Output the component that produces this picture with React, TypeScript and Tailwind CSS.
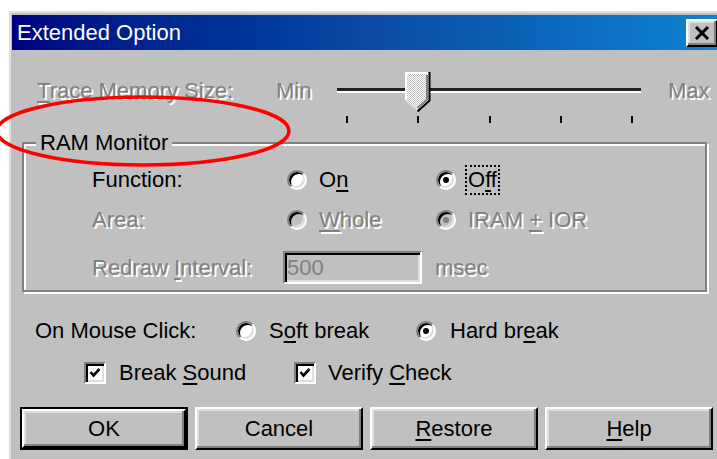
import type { ReactNode } from 'react'

const dim = 'text-[#808080] [text-shadow:2px_2px_0_#ffffff]'

function U({ children }: { children: ReactNode }) {
    return <span className="underline decoration-2 underline-offset-[3px]">{children}</span>
}

function Radio({ checked, disabled }: { checked?: boolean; disabled?: boolean }) {
    return (
        <span
            className={`flex h-[20px] w-[20px] shrink-0 items-center justify-center rounded-full border-2 border-t-[#808080] border-l-[#808080] border-r-white border-b-white shadow-[inset_2px_2px_0_#000,inset_-2px_-2px_0_#dfdfdf] ${
                disabled ? 'bg-[#c0c0c0]' : 'bg-white'
            }`}
        >
            {checked && <span className={`h-[6px] w-[6px] rounded-full ${disabled ? 'bg-[#808080]' : 'bg-black'}`} />}
        </span>
    )
}

function Check() {
    return (
        <span className="flex h-[22px] w-[22px] shrink-0 items-center justify-center border-2 border-t-[#808080] border-l-[#808080] border-r-white border-b-white bg-white shadow-[inset_2px_2px_0_#000,inset_-2px_-2px_0_#dfdfdf]">
            <svg width="14" height="14" viewBox="0 0 14 14">
                <path d="M2.5 6 L5.5 9.5 L11.5 3" fill="none" stroke="#000" strokeWidth="2.6" />
            </svg>
        </span>
    )
}

const bevel =
    'border-2 border-t-white border-l-white border-r-black border-b-black bg-[#c0c0c0] shadow-[inset_-2px_-2px_0_#808080,inset_2px_2px_0_#dfdfdf]'

function Button({ children, primary }: { children: ReactNode; primary?: boolean }) {
    if (primary) {
        return (
            <div className="h-[43px] w-[168px] border-2 border-black">
                <button className={`flex h-full w-full items-center justify-center ${bevel}`}>{children}</button>
            </div>
        )
    }
    return <button className={`flex h-[43px] w-[168px] items-center justify-center ${bevel}`}>{children}</button>
}

function Slider() {
    const ticks = [10, 81, 153, 224, 295]
    return (
        <div className="relative h-[52px] w-[304px]">
            <div className="absolute left-0 top-[16px] h-[5px] w-[304px] border-b-2 border-white bg-[#222]" />
            <svg className="absolute left-[68px] top-0" width="26" height="40" viewBox="0 0 26 40">
                <defs>
                    <pattern id="dither" width="2" height="2" patternUnits="userSpaceOnUse">
                        <rect width="2" height="2" fill="#c0c0c0" />
                        <rect width="1" height="1" fill="#fff" />
                        <rect x="1" y="1" width="1" height="1" fill="#fff" />
                    </pattern>
                </defs>
                <polygon points="1,1 24,1 24,28 12.5,39 1,28" fill="url(#dither)" />
                <polyline points="1,28 1,1 23,1" fill="none" stroke="#fff" strokeWidth="2" />
                <polyline points="1,28 11,37" fill="none" stroke="#dfdfdf" strokeWidth="2" />
                <polyline points="22,3 22,27.5 12.5,36" fill="none" stroke="#808080" strokeWidth="2" />
                <polyline points="24.5,0 24.5,28.5 12.5,39.5" fill="none" stroke="#000" strokeWidth="2" />
            </svg>
            {ticks.map((x) => (
                <div key={x} className="absolute top-[44px] h-[7px] w-[2px] bg-black" style={{ left: x - 1 }} />
            ))}
        </div>
    )
}

export default function App() {
    return (
        <div className="relative h-[459px] w-[717px] overflow-hidden bg-white font-['Liberation_Sans',Arial,sans-serif] text-[22px] leading-[26px] text-black">
            <div className="ml-[9px] mt-[11px] w-[716px] border-l-2 border-t-2 border-[#dfdfdf] bg-[#c0c0c0] pl-[1px] pt-[2px]">
                {/* title bar */}
                <div className="flex h-[35px] w-[710px] items-center justify-between bg-gradient-to-r from-[#000080] via-[#0c4aa6] to-[#1084d0] pl-[5px] pr-[4px]">
                    <span className="text-white">Extended Option</span>
                    <button className={`flex h-[28px] w-[32px] items-center justify-center ${bevel}`}>
                        <svg width="16" height="14" viewBox="0 0 16 14">
                            <path d="M2 1 L14 13 M14 1 L2 13" stroke="#000" strokeWidth="3" />
                        </svg>
                    </button>
                </div>

                <div className="h-[420px] pt-[22px]">
                    {/* trace memory size */}
                    <div className="flex items-start pl-[25px]">
                        <span className={`flex h-[38px] w-[239px] items-center ${dim}`}>
                            <span>
                                <U>T</U>race Memory Size:
                            </span>
                        </span>
                        <span className={`flex h-[38px] w-[61px] items-center ${dim}`}>Min</span>
                        <Slider />
                        <span className={`ml-[27px] flex h-[38px] items-center ${dim}`}>Max</span>
                    </div>

                    {/* RAM monitor group */}
                    <fieldset className="ml-[10px] mt-[6px] w-[685px] border-2 border-[#808080] pb-[6px] pl-[12px] pt-[5px] shadow-[inset_2px_2px_0_#fff,2px_2px_0_#fff]">
                        <legend className="bg-[#c0c0c0] px-[4px] leading-[26px]">RAM Monitor</legend>
                        <div className="pl-[56px]">
                            <div className="flex h-[38px] items-center">
                                <span className="w-[195px]">Function:</span>
                                <span className="flex w-[149px] items-center gap-[12px]">
                                    <Radio />
                                    <span>
                                        O<U>n</U>
                                    </span>
                                </span>
                                <span className="flex items-center gap-[9px]">
                                    <Radio checked />
                                    <span className="border-2 border-dotted border-black px-[1px] leading-[26px]">
                                        O<U>f</U>f
                                    </span>
                                </span>
                            </div>
                            <div className="mt-[2px] flex h-[38px] items-center">
                                <span className={`w-[195px] ${dim}`}>Area:</span>
                                <span className="flex w-[149px] items-center gap-[12px]">
                                    <Radio disabled />
                                    <span className={dim}>
                                        <U>W</U>hole
                                    </span>
                                </span>
                                <span className="flex items-center gap-[12px]">
                                    <Radio checked disabled />
                                    <span className={dim}>
                                        IRAM <U>+</U> IOR
                                    </span>
                                </span>
                            </div>
                            <div className="mt-[12px] flex h-[33px] items-center">
                                <span className={`w-[191px] ${dim}`}>
                                    Redraw <U>I</U>nterval:
                                </span>
                                <span className="flex h-[33px] w-[139px] items-center border-2 border-t-[#808080] border-l-[#808080] border-r-white border-b-white bg-[#c0c0c0] pl-[2px] text-[#808080] shadow-[inset_2px_2px_0_#000,inset_-2px_-2px_0_#dfdfdf]">
                                    500
                                </span>
                                <span className={`ml-[13px] ${dim}`}>msec</span>
                            </div>
                        </div>
                    </fieldset>

                    {/* mouse click mode */}
                    <div className="ml-[23px] mt-[22px] flex h-[34px] items-center">
                        <span className="w-[201px]">On Mouse Click:</span>
                        <span className="flex w-[180px] items-center gap-[13px]">
                            <Radio />
                            <span>
                                S<U>o</U>ft break
                            </span>
                        </span>
                        <span className="flex items-center gap-[14px]">
                            <Radio checked />
                            <span>
                                Hard br<U>e</U>ak
                            </span>
                        </span>
                    </div>

                    <div className="ml-[72px] mt-[8px] flex h-[34px] items-center">
                        <span className="flex w-[210px] items-center gap-[13px]">
                            <Check />
                            <span>
                                Break <U>S</U>ound
                            </span>
                        </span>
                        <span className="flex items-center gap-[12px]">
                            <Check />
                            <span>
                                Verify <U>C</U>heck
                            </span>
                        </span>
                    </div>

                    {/* dialog buttons */}
                    <div className="ml-[8px] mt-[17px] flex gap-[7px]">
                        <Button primary>OK</Button>
                        <Button>Cancel</Button>
                        <Button>
                            <span>
                                <U>R</U>estore
                            </span>
                        </Button>
                        <Button>
                            <span>
                                <U>H</U>elp
                            </span>
                        </Button>
                    </div>
                </div>
            </div>

            {/* red marker drawn around the group label */}
            <svg className="pointer-events-none absolute left-0 top-0" width="717" height="459">
                <ellipse cx="143" cy="131" rx="146" ry="34" fill="none" stroke="#ff0000" strokeWidth="3.5" />
            </svg>
        </div>
    )
}
